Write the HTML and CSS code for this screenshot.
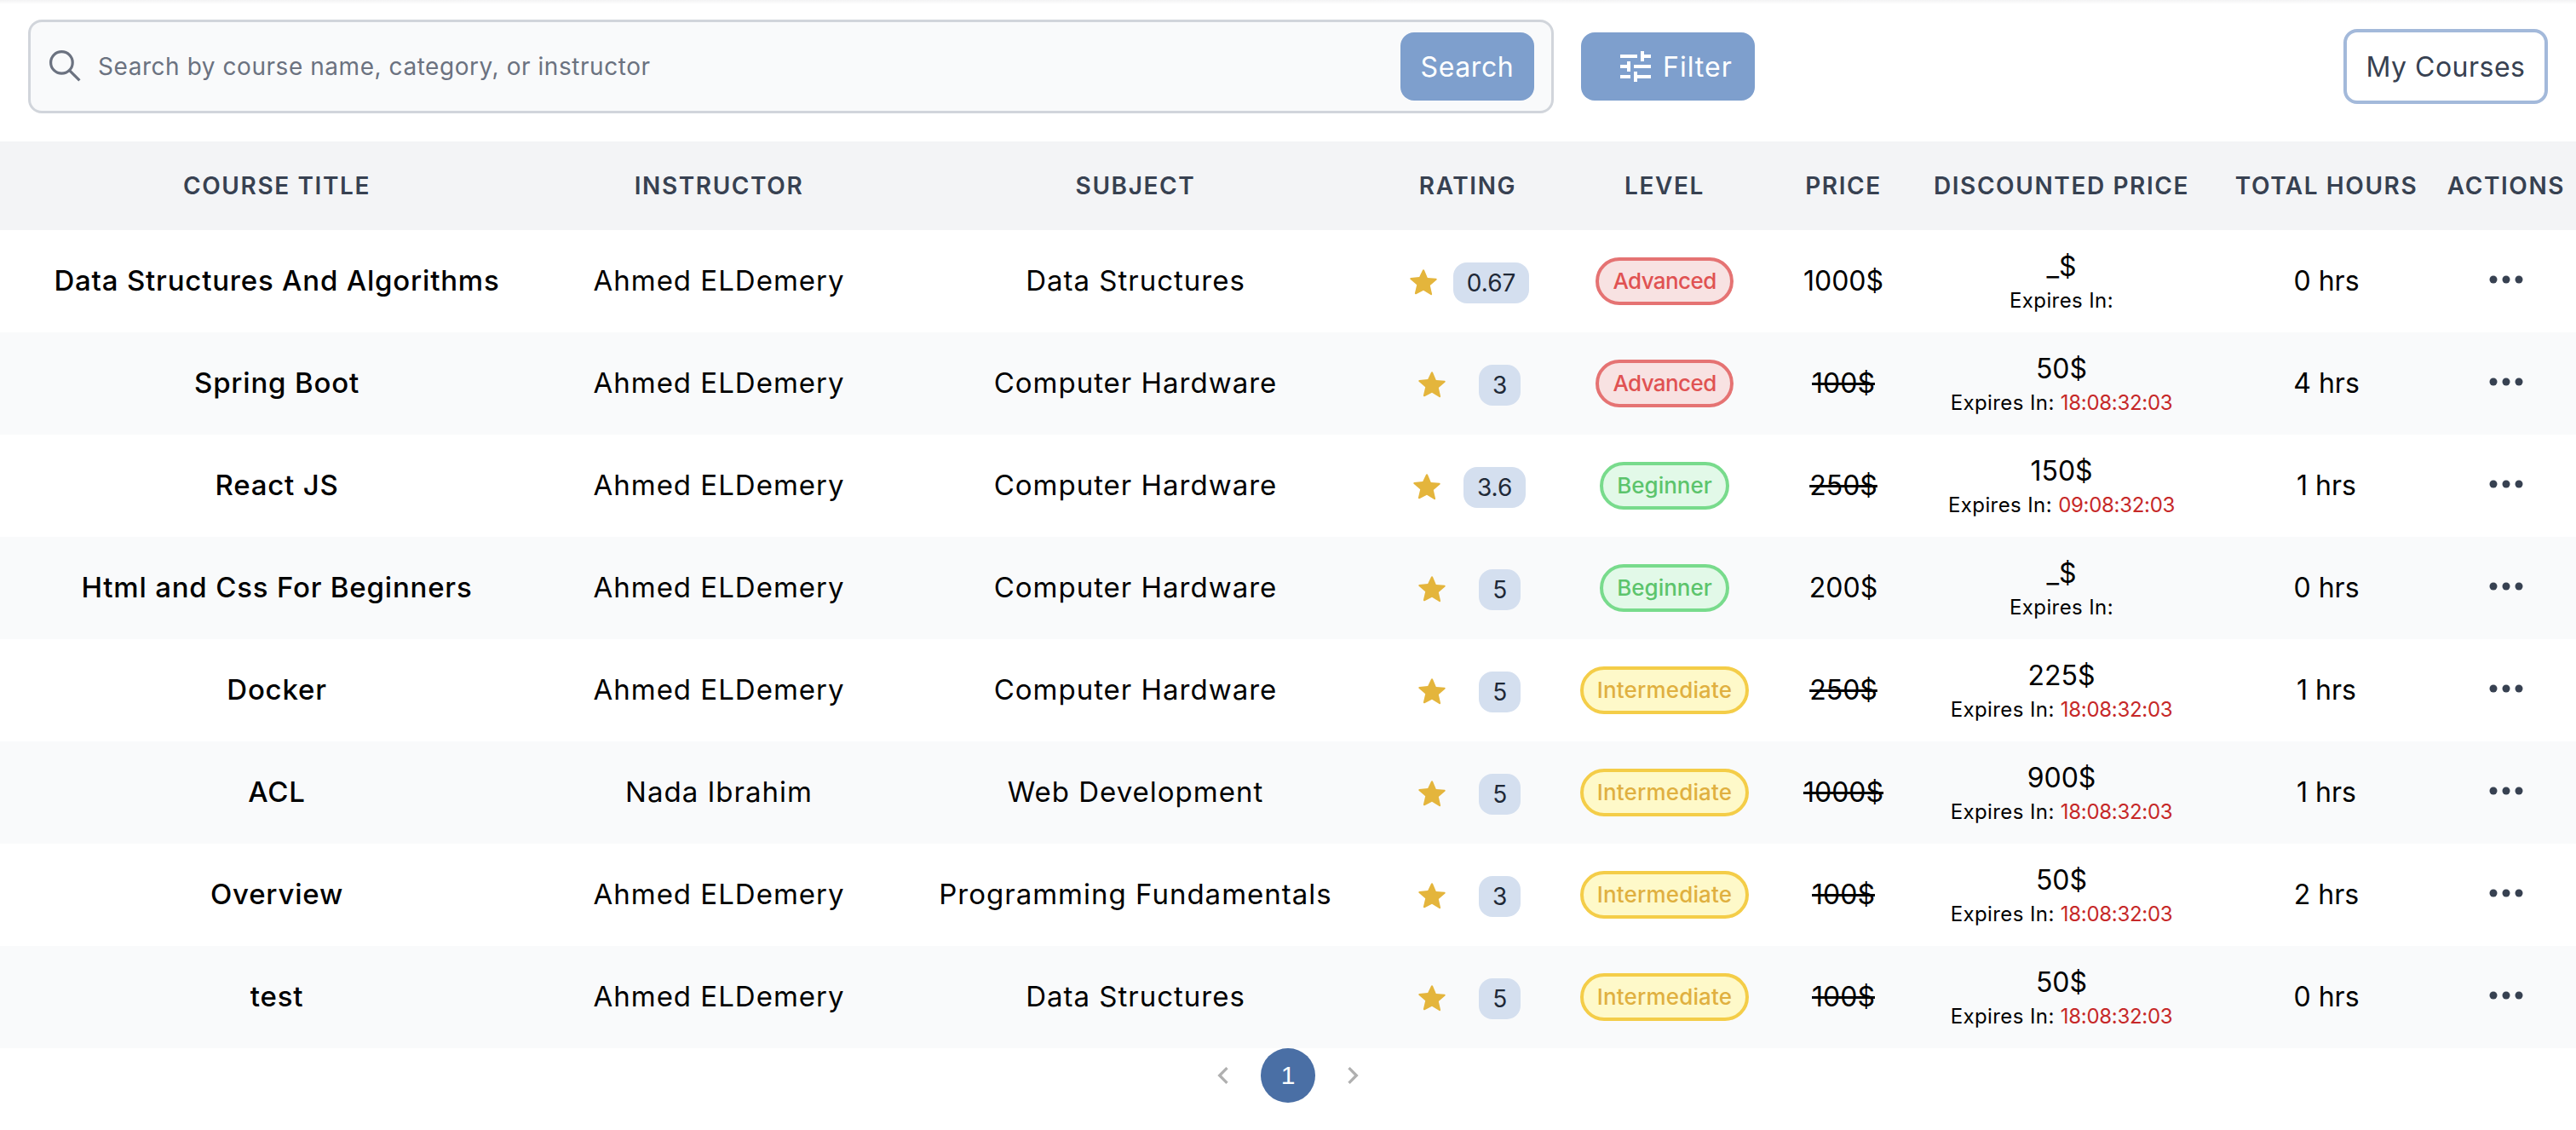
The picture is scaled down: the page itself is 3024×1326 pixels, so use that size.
FILE: index.html
```html
<!DOCTYPE html>
<html lang="en">
<head>
    <meta charset="UTF-8">
    <meta name="viewport" content="width=device-width, initial-scale=1.0">
    <title>Courses</title>
    <link rel="stylesheet" href="styles.css">
</head>
<body>
    <svg class="sprite">
        <symbol id="star" viewBox="0 0 24 24"><path d="M12 17.27l5.15 3.11a.6.6 0 0 0 .9-.65l-1.37-5.86 4.55-3.94a.6.6 0 0 0-.34-1.05l-5.99-.51-2.34-5.53a.6.6 0 0 0-1.1 0L9.1 7.87l-5.99.51a.6.6 0 0 0-.34 1.05l4.55 3.94-1.37 5.86a.6.6 0 0 0 .9.65z"/></symbol>
        <symbol id="dots" viewBox="0 0 40 10"><circle cx="5" cy="5" r="4.5"/><circle cx="20" cy="5" r="4.5"/><circle cx="35" cy="5" r="4.5"/></symbol>
    </svg>

    <div class="top-shade"></div>

    <!-- Toolbar -->
    <div class="toolbar">
        <form class="search-box">
            <svg class="search-icon" viewBox="0 0 24 24"><circle cx="9.7" cy="9.7" r="6.4"/><path d="M14.4 14.4L20.2 20.2"/></svg>
            <input class="search-input" type="text" placeholder="Search by course name, category, or instructor">
            <button class="btn btn-search" type="submit">Search</button>
        </form>
        <button class="btn btn-filter" type="button">
            <svg class="filter-icon" viewBox="0 0 24 24"><path d="M3 17v2h6v-2H3zM3 5v2h10V5H3zm10 16v-2h8v-2h-8v-2h-2v6h2zM7 9v2H3v2h4v2h2V9H7zm14 4v-2H11v2h10zm-6-4h2V7h4V5h-4V3h-2v6z"/></svg>
            Filter
        </button>
        <button class="btn-outline" type="button">My Courses</button>
    </div>

    <!-- Courses Table -->
    <table class="courses">
        <colgroup>
            <col class="col-title"><col class="col-instructor"><col class="col-subject"><col class="col-rating"><col class="col-level"><col class="col-price"><col class="col-discount"><col class="col-hours"><col class="col-actions">
        </colgroup>
        <thead>
            <tr>
                <th>Course Title</th><th>Instructor</th><th>Subject</th><th>Rating</th><th>Level</th><th>Price</th><th>Discounted Price</th><th>Total Hours</th><th>Actions</th>
            </tr>
        </thead>
        <tbody>
            <tr>
                <td class="title">Data Structures And Algorithms</td>
                <td>Ahmed ELDemery</td>
                <td>Data Structures</td>
                <td><div class="rating"><svg class="star"><use href="#star"/></svg><span class="score">0.67</span></div></td>
                <td><span class="pill pill-advanced">Advanced</span></td>
                <td>1000$</td>
                <td><div class="new-price">_$</div><div class="expires">Expires In:</div></td>
                <td>0 hrs</td>
                <td><svg class="dots"><use href="#dots"/></svg></td>
            </tr>
            <tr>
                <td class="title">Spring Boot</td>
                <td>Ahmed ELDemery</td>
                <td>Computer Hardware</td>
                <td><div class="rating"><svg class="star"><use href="#star"/></svg><span class="score">3</span></div></td>
                <td><span class="pill pill-advanced">Advanced</span></td>
                <td><s>100$</s></td>
                <td><div class="new-price">50$</div><div class="expires">Expires In: <span class="timer">18:08:32:03</span></div></td>
                <td>4 hrs</td>
                <td><svg class="dots"><use href="#dots"/></svg></td>
            </tr>
            <tr>
                <td class="title">React JS</td>
                <td>Ahmed ELDemery</td>
                <td>Computer Hardware</td>
                <td><div class="rating"><svg class="star"><use href="#star"/></svg><span class="score">3.6</span></div></td>
                <td><span class="pill pill-beginner">Beginner</span></td>
                <td><s>250$</s></td>
                <td><div class="new-price">150$</div><div class="expires">Expires In: <span class="timer">09:08:32:03</span></div></td>
                <td>1 hrs</td>
                <td><svg class="dots"><use href="#dots"/></svg></td>
            </tr>
            <tr>
                <td class="title">Html and Css For Beginners</td>
                <td>Ahmed ELDemery</td>
                <td>Computer Hardware</td>
                <td><div class="rating"><svg class="star"><use href="#star"/></svg><span class="score">5</span></div></td>
                <td><span class="pill pill-beginner">Beginner</span></td>
                <td>200$</td>
                <td><div class="new-price">_$</div><div class="expires">Expires In:</div></td>
                <td>0 hrs</td>
                <td><svg class="dots"><use href="#dots"/></svg></td>
            </tr>
            <tr>
                <td class="title">Docker</td>
                <td>Ahmed ELDemery</td>
                <td>Computer Hardware</td>
                <td><div class="rating"><svg class="star"><use href="#star"/></svg><span class="score">5</span></div></td>
                <td><span class="pill pill-intermediate">Intermediate</span></td>
                <td><s>250$</s></td>
                <td><div class="new-price">225$</div><div class="expires">Expires In: <span class="timer">18:08:32:03</span></div></td>
                <td>1 hrs</td>
                <td><svg class="dots"><use href="#dots"/></svg></td>
            </tr>
            <tr>
                <td class="title">ACL</td>
                <td>Nada Ibrahim</td>
                <td>Web Development</td>
                <td><div class="rating"><svg class="star"><use href="#star"/></svg><span class="score">5</span></div></td>
                <td><span class="pill pill-intermediate">Intermediate</span></td>
                <td><s>1000$</s></td>
                <td><div class="new-price">900$</div><div class="expires">Expires In: <span class="timer">18:08:32:03</span></div></td>
                <td>1 hrs</td>
                <td><svg class="dots"><use href="#dots"/></svg></td>
            </tr>
            <tr>
                <td class="title">Overview</td>
                <td>Ahmed ELDemery</td>
                <td>Programming Fundamentals</td>
                <td><div class="rating"><svg class="star"><use href="#star"/></svg><span class="score">3</span></div></td>
                <td><span class="pill pill-intermediate">Intermediate</span></td>
                <td><s>100$</s></td>
                <td><div class="new-price">50$</div><div class="expires">Expires In: <span class="timer">18:08:32:03</span></div></td>
                <td>2 hrs</td>
                <td><svg class="dots"><use href="#dots"/></svg></td>
            </tr>
            <tr>
                <td class="title">test</td>
                <td>Ahmed ELDemery</td>
                <td>Data Structures</td>
                <td><div class="rating"><svg class="star"><use href="#star"/></svg><span class="score">5</span></div></td>
                <td><span class="pill pill-intermediate">Intermediate</span></td>
                <td><s>100$</s></td>
                <td><div class="new-price">50$</div><div class="expires">Expires In: <span class="timer">18:08:32:03</span></div></td>
                <td>0 hrs</td>
                <td><svg class="dots"><use href="#dots"/></svg></td>
            </tr>
        </tbody>
    </table>

    <!-- Pagination -->
    <nav class="pagination">
        <svg class="chevron" viewBox="0 0 24 24"><path d="M15.41 7.41L14 6l-6 6 6 6 1.41-1.41L10.83 12z"/></svg>
        <span class="page-current">1</span>
        <svg class="chevron" viewBox="0 0 24 24"><path d="M10 6L8.59 7.41 13.17 12l-4.58 4.59L10 18l6-6z"/></svg>
    </nav>
</body>
</html>
```

FILE: styles.css
```css
/* General Page Styling */
html, body {
    margin: 0;
    background: #ffffff;
    font-family: Inter, "Open Sans", sans-serif;
    color: #000000;
}

.sprite {
    display: none;
}

.top-shade {
    height: 5px;
    background: linear-gradient(to bottom, #f3f3f4, #ffffff);
}

/* Toolbar */
.toolbar {
    display: flex;
    align-items: center;
    height: 161px;
    padding: 0 33px 15px;
    box-sizing: border-box;
}

.search-box {
    width: 1791px;
    height: 110px;
    box-sizing: border-box;
    display: flex;
    align-items: center;
    padding: 0 20px 0 17px;
    background-color: #f9fafb;
    border: 3px solid #d1d5db;
    border-radius: 16px;
}

.search-icon {
    width: 48px;
    height: 48px;
    fill: none;
    stroke: #6b7280;
    stroke-width: 1.6;
    flex-shrink: 0;
}

.search-input {
    flex-grow: 1;
    border: none;
    outline: none;
    background: transparent;
    margin-left: 14px;
    padding: 0;
    font-family: inherit;
    font-size: 28px;
    letter-spacing: 0.55px;
    color: #374151;
}

    .search-input::placeholder {
        color: #6b7280;
        opacity: 1;
    }

.btn {
    height: 80px;
    box-sizing: border-box;
    border: none;
    border-radius: 16px;
    background-color: #7e9fcd;
    color: #ffffff;
    font-family: inherit;
    font-size: 32px;
    letter-spacing: 0.6px;
    cursor: pointer;
}

.btn-search {
    width: 157px;
    padding: 0;
}

.btn-filter {
    width: 204px;
    margin-left: 32px;
    padding: 0 0 0 40px;
    display: flex;
    align-items: center;
    gap: 8px;
    letter-spacing: 1px;
}

.filter-icon {
    width: 48px;
    height: 48px;
    fill: #ffffff;
}

.btn-outline {
    width: 240px;
    height: 88px;
    margin-left: auto;
    box-sizing: border-box;
    border: 4px solid #a3b9da;
    border-radius: 16px;
    background-color: #ffffff;
    color: #374151;
    font-family: inherit;
    font-size: 32px;
    letter-spacing: 0.5px;
    cursor: pointer;
}

/* Courses Table */
.courses {
    width: 3024px;
    table-layout: fixed;
    border-collapse: collapse;
}

.col-title { width: 650px; }
.col-instructor { width: 388px; }
.col-subject { width: 590px; }
.col-rating { width: 190px; }
.col-level { width: 272px; }
.col-price { width: 148px; }
.col-discount { width: 364px; }
.col-hours { width: 258px; }
.col-actions { width: 164px; }

.courses th {
    height: 104px;
    padding: 0;
    background-color: #f3f4f6;
    color: #374151;
    font-size: 28px;
    font-weight: 600;
    letter-spacing: 1.6px;
    text-transform: uppercase;
    text-align: center;
}

.courses td {
    height: 120px;
    box-sizing: border-box;
    padding: 0 0 2px;
    text-align: center;
    font-size: 32px;
}

    .courses td:nth-child(-n+3) {
        font-size: 33px;
        letter-spacing: 1px;
    }

.courses tbody tr:nth-child(even) {
    background-color: #f9fafb;
}

.courses td.title {
    font-weight: 500;
    letter-spacing: 0.8px;
}

/* Rating */
.rating {
    width: 160px;
    margin: 6px auto 0;
    display: flex;
    justify-content: space-around;
    align-items: center;
}

.star {
    width: 40px;
    height: 40px;
    fill: #e4b53c;
}

.score {
    height: 48px;
    line-height: 48px;
    padding: 0 16px;
    background-color: #d4dfef;
    border-radius: 16px;
    font-size: 28px;
    color: #1f2937;
}

/* Level Pills */
.pill {
    display: inline-block;
    height: 56px;
    line-height: 48px;
    box-sizing: border-box;
    margin-top: 2px;
    padding: 0 16px;
    border: 4px solid;
    border-radius: 28px;
    font-size: 26px;
    font-weight: 500;
}

.pill-advanced {
    background-color: #f8e2e2;
    border-color: #e57373;
    color: #e05252;
    letter-spacing: -0.6px;
}

.pill-beginner {
    background-color: #e2f9e8;
    border-color: #78db8c;
    color: #5cc46c;
}

.pill-intermediate {
    background-color: #fef9c9;
    border-color: #f4cd48;
    color: #e0b040;
    letter-spacing: 0.15px;
}

/* Discounted Price */
.new-price {
    font-size: 32px;
    line-height: 40px;
    margin-top: 4px;
}

.expires {
    font-size: 24px;
    line-height: 32px;
    margin-top: 4px;
    letter-spacing: 0.4px;
}

.timer {
    color: #c62828;
    letter-spacing: -0.3px;
}

.dots {
    width: 40px;
    height: 10px;
    fill: #374151;
    display: block;
    margin: -2px auto 0;
}

/* Pagination */
.pagination {
    display: flex;
    justify-content: center;
    align-items: center;
    gap: 24px;
}

.chevron {
    width: 40px;
    height: 40px;
    fill: #b0b0b0;
}

.page-current {
    width: 64px;
    height: 64px;
    line-height: 64px;
    border-radius: 50%;
    background-color: #4a6fa5;
    color: #ffffff;
    text-align: center;
    font-family: "Liberation Sans", sans-serif;
    font-size: 30px;
}
```
